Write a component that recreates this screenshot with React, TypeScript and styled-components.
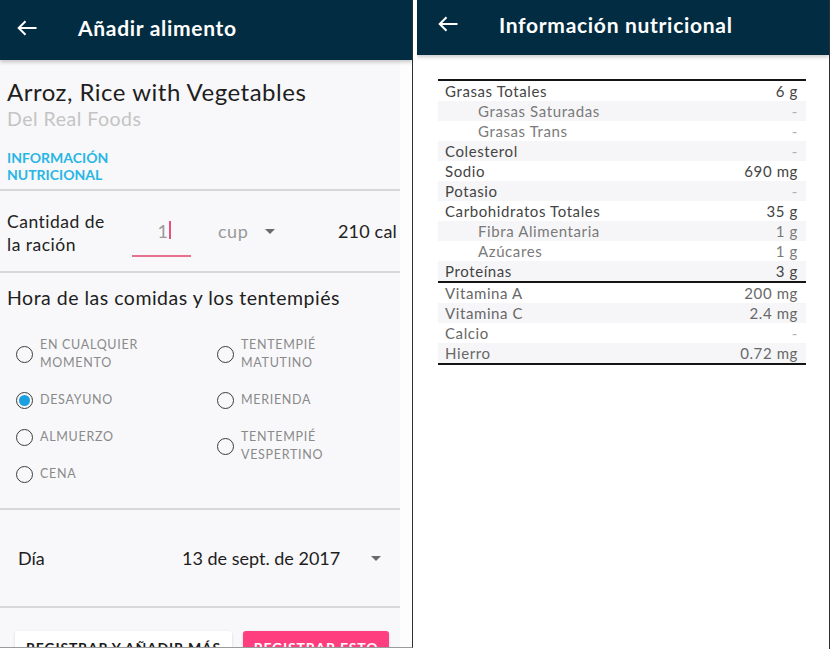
import React from 'react';
import styled, { createGlobalStyle } from 'styled-components';

const GlobalStyle = createGlobalStyle`
  html, body {
    margin: 0;
    padding: 0;
    background: #fff;
  }
  body {
    font-family: Lato, 'Liberation Sans', sans-serif;
    -webkit-font-smoothing: antialiased;
  }
`;

const Page = styled.div`
  display: flex;
  gap: 4px;
  width: 830px;
  height: 649px;
  overflow: hidden;
  align-items: flex-start;
`;

const Phone = styled.div<{ $h: number; $bottom?: boolean }>`
  width: 412px;
  height: ${(p) => p.$h}px;
  flex: none;
  display: flex;
  flex-direction: column;
  border-right: 1px solid #2e2e2e;
  border-bottom: ${(p) => (p.$bottom ? '1px solid #9a9a9a' : 'none')};
  overflow: hidden;
  background: #fff;
`;

const Header = styled.div<{ $h: number; $pb: number; $pl: number }>`
  height: ${(p) => p.$h}px;
  padding: 0 0 ${(p) => p.$pb}px ${(p) => p.$pl}px;
  box-sizing: border-box;
  flex: none;
  display: flex;
  align-items: center;
  gap: 41px;
  background: #022c41;
  color: #fff;
  box-shadow: 0 2px 4px rgba(0, 0, 0, 0.22);
  position: relative;
  z-index: 1;
`;

const HeaderTitle = styled.div`
  font-size: 21px;
  font-weight: 700;
  letter-spacing: 0.7px;
`;

const Body = styled.div`
  flex: 1;
  display: flex;
  min-height: 0;
`;

const Content = styled.div`
  width: 400px;
  flex: none;
  background: #f8f8fa;
  display: flex;
  flex-direction: column;
  letter-spacing: 0.5px;
  & > * {
    flex-shrink: 0;
  }
`;

const Gutter = styled.div`
  flex: 1;
  background: #fdfdfe;
`;

const Divider = styled.div`
  height: 2px;
  background: #d8d8da;
`;

const InfoBlock = styled.div`
  padding: 17px 7px 6px;
`;

const FoodName = styled.div`
  font-size: 24px;
  line-height: 30px;
  color: #1e1e1e;
`;

const Brand = styled.div`
  font-size: 19.5px;
  line-height: 24px;
  color: #c4c4c4;
`;

const InfoLink = styled.div`
  margin-top: 18px;
  font-size: 14px;
  line-height: 17px;
  font-weight: 700;
  color: #28b6e4;
  letter-spacing: 0;
`;

const ServingRow = styled.div`
  height: 80px;
  display: flex;
  align-items: center;
  padding: 0 3px 0 7px;
`;

const ServingLabel = styled.div`
  width: 125px;
  margin-top: 3px;
  font-size: 17.5px;
  line-height: 23px;
  color: #222;
`;

const QtyField = styled.div`
  width: 59px;
  height: 40px;
  margin-top: 12px;
  box-sizing: border-box;
  border-bottom: 2px solid #e8708f;
  display: flex;
  justify-content: center;
  align-items: flex-start;
  padding: 3px 0 0 6px;
  font-size: 18px;
  color: #9a9a9a;
`;

const Caret = styled.span`
  display: inline-block;
  width: 2px;
  height: 18px;
  margin: 1px 0 0 1px;
  background: #e8517b;
`;

const Select = styled.div<{ $gap: number }>`
  display: flex;
  align-items: center;
  gap: ${(p) => p.$gap}px;
`;

const UnitText = styled.span`
  margin-left: 27px;
  font-size: 18px;
  color: #9a9a9a;
`;

const Triangle = styled.span<{ $w: number }>`
  width: 0;
  height: 0;
  border-left: ${(p) => p.$w / 2}px solid transparent;
  border-right: ${(p) => p.$w / 2}px solid transparent;
  border-top: 5px solid #6a6a6a;
`;

const Calories = styled.span`
  margin-left: auto;
  font-size: 18px;
  letter-spacing: 0.2px;
  color: #222;
`;

const MealsSection = styled.div`
  padding: 13px 0 15px;
`;

const SectionTitle = styled.div`
  padding-left: 7px;
  font-size: 19.5px;
  line-height: 24px;
  color: #1e1e1e;
`;

const MealGrid = styled.div`
  margin-top: 17px;
  padding-left: 16px;
  display: grid;
  grid-template-columns: 201px 1fr;
`;

const MealColumn = styled.div`
  display: flex;
  flex-direction: column;
`;

const MealOption = styled.label`
  display: flex;
  align-items: center;
  gap: 7px;
  padding: 9px 0 10px;
`;

const Radio = styled.span<{ $checked?: boolean }>`
  width: 17px;
  height: 17px;
  flex: none;
  box-sizing: border-box;
  border-radius: 50%;
  border: 1.5px solid #3c3c3c;
  padding: 2px;
  &::after {
    content: '';
    display: ${(p) => (p.$checked ? 'block' : 'none')};
    width: 100%;
    height: 100%;
    border-radius: 50%;
    background: #1b9fe0;
  }
`;

const MealLabel = styled.span`
  font-size: 12.5px;
  line-height: 18px;
  color: #8a8a8a;
  letter-spacing: 0.7px;
`;

const DayRow = styled.div`
  height: 96px;
  display: flex;
  align-items: center;
  padding: 0 19px 0 18px;
  font-size: 18px;
  letter-spacing: 0;
  color: #1e1e1e;
`;

const DayLabel = styled.span`
  width: 164px;
`;

const DayValue = styled.span`
  flex: 1;
`;

const Actions = styled.div`
  display: flex;
  gap: 11px;
  padding: 23px 0 0 15px;
`;

const ActionButton = styled.div<{ $primary?: boolean; $w: number }>`
  width: ${(p) => p.$w}px;
  height: 40px;
  box-sizing: border-box;
  padding-top: 7px;
  border-radius: 3px;
  text-align: center;
  font-size: 14px;
  line-height: 20px;
  font-weight: 700;
  letter-spacing: 0.8px;
  white-space: nowrap;
  background: ${(p) => (p.$primary ? '#ff3e80' : '#fff')};
  color: ${(p) => (p.$primary ? '#fff' : '#1a1a1a')};
  box-shadow: 0 1px 3px rgba(0, 0, 0, 0.14);
`;

const Table = styled.div`
  margin: 24px 23px 0 21px;
  border-top: 2px solid #141414;
  border-bottom: 2px solid #141414;
  letter-spacing: 0.6px;
`;

const Group = styled.div`
  & + & {
    border-top: 2px solid #141414;
  }
  & > div:nth-child(even) {
    background: #f6f6f8;
  }
`;

const NutrientRow = styled.div<{ $kind: 'main' | 'sub' | 'vit' }>`
  height: 20px;
  display: flex;
  justify-content: space-between;
  align-items: center;
  padding: 0 8px 0 ${(p) => (p.$kind === 'sub' ? 40 : 7)}px;
  font-size: 15px;
  color: ${(p) => (p.$kind === 'main' ? '#444' : p.$kind === 'sub' ? '#7a7a7a' : '#686868')};
`;

const Dash = styled.span`
  color: #b0b0b0;
`;

const BackArrow = () => (
  <svg width="20" height="16" viewBox="0 0 20 16" fill="none" stroke="#fff" strokeWidth="2">
    <path d="M19.5 8H1.8" />
    <path d="M8.5 1.2L1.7 8l6.8 6.8" />
  </svg>
);

type Kind = 'main' | 'sub' | 'vit';
const macros: [string, string, Kind][] = [
  ['Grasas Totales', '6 g', 'main'],
  ['Grasas Saturadas', '-', 'sub'],
  ['Grasas Trans', '-', 'sub'],
  ['Colesterol', '-', 'main'],
  ['Sodio', '690 mg', 'main'],
  ['Potasio', '-', 'main'],
  ['Carbohidratos Totales', '35 g', 'main'],
  ['Fibra Alimentaria', '1 g', 'sub'],
  ['Azúcares', '1 g', 'sub'],
  ['Proteínas', '3 g', 'main'],
];
const vitamins: [string, string, Kind][] = [
  ['Vitamina A', '200 mg', 'vit'],
  ['Vitamina C', '2.4 mg', 'vit'],
  ['Calcio', '-', 'vit'],
  ['Hierro', '0.72 mg', 'vit'],
];

const leftMeals = [['EN CUALQUIER', 'MOMENTO'], ['DESAYUNO'], ['ALMUERZO'], ['CENA']];
const rightMeals = [['TENTEMPIÉ', 'MATUTINO'], ['MERIENDA'], ['TENTEMPIÉ', 'VESPERTINO']];

const renderMeals = (items: string[][]) =>
  items.map((lines) => (
    <MealOption key={lines.join(' ')}>
      <Radio $checked={lines[0] === 'DESAYUNO'} />
      <MealLabel>
        {lines.map((l, i) => (
          <React.Fragment key={l}>
            {i > 0 && <br />}
            {l}
          </React.Fragment>
        ))}
      </MealLabel>
    </MealOption>
  ));

const renderRows = (rows: [string, string, Kind][]) =>
  rows.map(([name, value, kind]) => (
    <NutrientRow key={name} $kind={kind}>
      <span>{name}</span>
      {value === '-' ? <Dash>-</Dash> : <span>{value}</span>}
    </NutrientRow>
  ));

const App: React.FC = () => {
  return (
    <Page>
      <GlobalStyle />
      <Phone $h={647} $bottom>
        <Header $h={60} $pb={5} $pl={17}>
          <BackArrow />
          <HeaderTitle>Añadir alimento</HeaderTitle>
        </Header>
        <Body>
          <Content>
            <InfoBlock>
              <FoodName>Arroz, Rice with Vegetables</FoodName>
              <Brand>Del Real Foods</Brand>
              <InfoLink>
                INFORMACIÓN
                <br />
                NUTRICIONAL
              </InfoLink>
            </InfoBlock>
            <Divider />
            <ServingRow>
              <ServingLabel>
                Cantidad de
                <br />
                la ración
              </ServingLabel>
              <QtyField>
                1<Caret />
              </QtyField>
              <Select $gap={17}>
                <UnitText>cup</UnitText>
                <Triangle $w={10} />
              </Select>
              <Calories>210 cal</Calories>
            </ServingRow>
            <Divider />
            <MealsSection>
              <SectionTitle>Hora de las comidas y los tentempiés</SectionTitle>
              <MealGrid>
                <MealColumn>{renderMeals(leftMeals)}</MealColumn>
                <MealColumn>{renderMeals(rightMeals)}</MealColumn>
              </MealGrid>
            </MealsSection>
            <Divider />
            <DayRow>
              <DayLabel>Día</DayLabel>
              <DayValue>13 de sept. de 2017</DayValue>
              <Triangle $w={11} />
            </DayRow>
            <Divider />
            <Actions>
              <ActionButton $w={217}>REGISTRAR Y AÑADIR MÁS</ActionButton>
              <ActionButton $w={146} $primary>
                REGISTRAR ESTO
              </ActionButton>
            </Actions>
          </Content>
          <Gutter />
        </Body>
      </Phone>
      <Phone $h={649}>
        <Header $h={55} $pb={7} $pl={21}>
          <BackArrow />
          <HeaderTitle>Información nutricional</HeaderTitle>
        </Header>
        <Table>
          <Group>{renderRows(macros)}</Group>
          <Group>{renderRows(vitamins)}</Group>
        </Table>
      </Phone>
    </Page>
  );
};

export default App;
